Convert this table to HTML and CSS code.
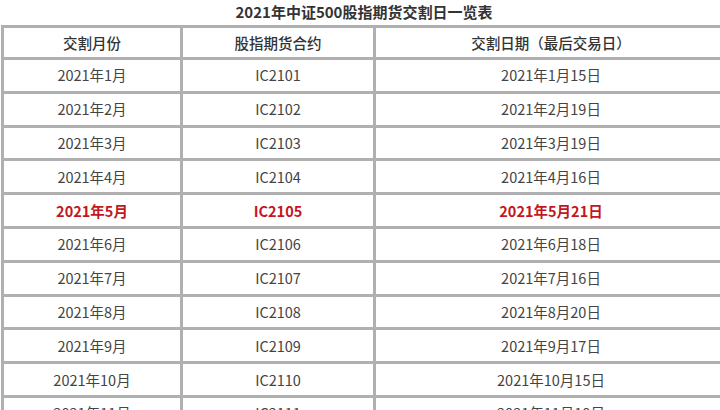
FILE: index.html
```html
<!DOCTYPE html>
<html lang="zh">
<head>
<meta charset="utf-8">
<title>2021年中证500股指期货交割日一览表</title>
<link rel="stylesheet" href="styles.css">
</head>
<body>
<div class="wrap">
  <div class="title">2021年中证500股指期货交割日一览表</div>
  <table class="tbl">
    <colgroup>
      <col class="c1"><col class="c2"><col class="c3">
    </colgroup>
    <thead>
      <tr><th>交割月份</th><th>股指期货合约</th><th>交割日期（最后交易日）</th></tr>
    </thead>
    <tbody>
      <tr><td>2021年1月</td><td>IC2101</td><td>2021年1月15日</td></tr>
      <tr><td>2021年2月</td><td>IC2102</td><td>2021年2月19日</td></tr>
      <tr><td>2021年3月</td><td>IC2103</td><td>2021年3月19日</td></tr>
      <tr><td>2021年4月</td><td>IC2104</td><td>2021年4月16日</td></tr>
      <tr class="hl"><td>2021年5月</td><td>IC2105</td><td>2021年5月21日</td></tr>
      <tr><td>2021年6月</td><td>IC2106</td><td>2021年6月18日</td></tr>
      <tr><td>2021年7月</td><td>IC2107</td><td>2021年7月16日</td></tr>
      <tr><td>2021年8月</td><td>IC2108</td><td>2021年8月20日</td></tr>
      <tr><td>2021年9月</td><td>IC2109</td><td>2021年9月17日</td></tr>
      <tr><td>2021年10月</td><td>IC2110</td><td>2021年10月15日</td></tr>
      <tr><td>2021年11月</td><td>IC2111</td><td>2021年11月19日</td></tr>
      <tr><td>2021年12月</td><td>IC2112</td><td>2021年12月17日</td></tr>
    </tbody>
  </table>
</div>
</body>
</html>
```
FILE: styles.css
```css
html, body {
  margin: 0;
  padding: 0;
  background: #ffffff;
  overflow: hidden;
}
body {
  font-family: "Noto Sans CJK SC", "Noto Sans", sans-serif;
  color: #444444;
}
.wrap {
  width: 726px;
  padding-left: 1px;
}
.title {
  height: 25px;
  line-height: 24px;
  text-align: center;
  font-size: 15px;
  font-weight: bold;
  color: #333333;
}
.tbl {
  width: 725px;
  table-layout: fixed;
  border-collapse: collapse;
  border: 3px solid #a9a9a9;
  font-size: 14.5px;
}
.c1 { width: 179px; }
.c2 { width: 193px; }
.c3 { width: 353px; }
.tbl th,
.tbl td {
  border: 3px solid #b0b0b0;
  text-align: center;
  padding: 0;
  height: 30.8px;
  line-height: 20px;
}
.tbl th {
  font-weight: 500;
  color: #333333;
  height: 29px;
}
.tbl thead tr {
  border-bottom: 3px solid #8a8a8a;
}
.tbl tr.hl td {
  color: #c4161c;
  font-weight: bold;
}
```
